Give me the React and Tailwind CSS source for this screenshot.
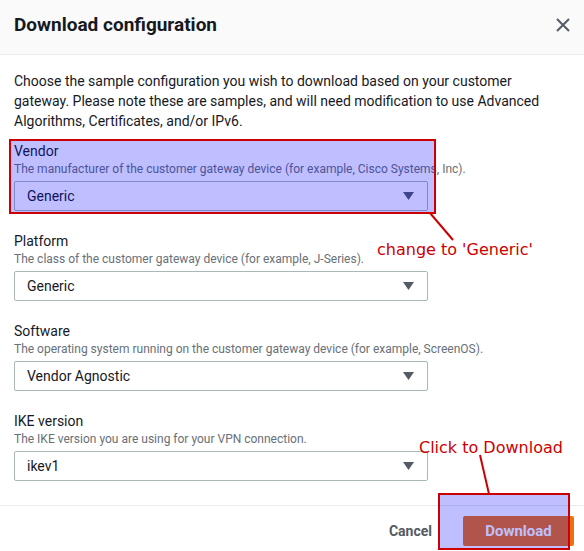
const fields = [
  { label: 'Vendor', hint: 'The manufacturer of the customer gateway device (for example, Cisco Systems, Inc).', value: 'Generic' },
  { label: 'Platform', hint: 'The class of the customer gateway device (for example, J-Series).', value: 'Generic' },
  { label: 'Software', hint: 'The operating system running on the customer gateway device (for example, ScreenOS).', value: 'Vendor Agnostic' },
  { label: 'IKE version', hint: 'The IKE version you are using for your VPN connection.', value: 'ikev1' },
]

function Caret() {
  return (
    <svg width="11" height="8" viewBox="0 0 11 8" className="shrink-0">
      <polygon points="0,0 11,0 5.5,8" fill="#545b64" />
    </svg>
  )
}

function Field({ label, hint, value }) {
  return (
    <div className="flex flex-col">
      <p className="text-[14px] leading-[20px] text-[#16191f]">{label}</p>
      <p className="text-[12px] leading-[16px] text-[#687078]">{hint}</p>
      <div className="mt-[4px] h-[30px] w-[414px] border border-[#aab7b8] rounded-[2px] pl-[12px] pr-[13px] flex items-center justify-between bg-white">
        <span className="text-[14px] text-[#16191f]">{value}</span>
        <Caret />
      </div>
    </div>
  )
}

export default function App() {
  return (
    <div className="relative w-[584px] h-[551px] overflow-hidden bg-white font-['Roboto',sans-serif] text-[#16191f]">
      {/* Header */}
      <div className="h-[55px] bg-[#fafafa] border-b border-[#eaeded] flex items-center justify-between pl-[14px] pr-[13px]">
        <h2 className="text-[19px] font-bold leading-[24px] -mt-[5px]">Download configuration</h2>
        <svg width="16" height="16" viewBox="0 0 16 16" className="-mt-[5px]">
          <path d="M2 2 L14 14 M14 2 L2 14" stroke="#545b64" strokeWidth="2" />
        </svg>
      </div>

      {/* Body */}
      <div className="px-[14px] pt-[16px]">
        <p className="text-[14px] leading-[20px] max-w-[550px]">
          Choose the sample configuration you wish to download based on your customer gateway. Please note these are samples, and will need modification to use Advanced Algorithms, Certificates, and/or IPv6.
        </p>
        <div className="mt-[10px] flex flex-col gap-[20px]">
          {fields.map((f) => <Field key={f.label} {...f} />)}
        </div>
      </div>

      {/* Footer */}
      <div className="mt-[24px] border-t border-[#eaeded] pt-[10px] pr-[10px] flex items-center justify-end gap-[31px]">
        <button className="text-[14px] font-bold text-[#545b64]">Cancel</button>
        <button className="h-[30px] w-[111px] rounded-[2px] bg-[#ec7211] text-white text-[15px] font-bold">Download</button>
      </div>

      {/* Annotations */}
      <div className="absolute left-[9px] top-[139px] w-[427px] h-[75px] border-2 border-[#cc0000] bg-[rgba(0,0,255,0.25)]" />
      <div className="absolute left-[438px] top-[493px] w-[132px] h-[57px] border-2 border-[#cc0000] bg-[rgba(0,0,255,0.25)]" />
      <svg className="absolute left-0 top-0" width="584" height="551">
        <line x1="430" y1="213" x2="453" y2="240" stroke="#cc0000" strokeWidth="2" />
        <line x1="480" y1="455" x2="489" y2="494" stroke="#cc0000" strokeWidth="2" />
      </svg>
      <span className="absolute left-[377px] top-[239px] text-[16px] leading-[22px] text-[#cc0000] font-['DejaVu_Sans',sans-serif]">change to 'Generic'</span>
      <span className="absolute left-[419px] top-[437px] text-[16px] leading-[22px] text-[#cc0000] font-['DejaVu_Sans',sans-serif]">Click to Download</span>
    </div>
  )
}
